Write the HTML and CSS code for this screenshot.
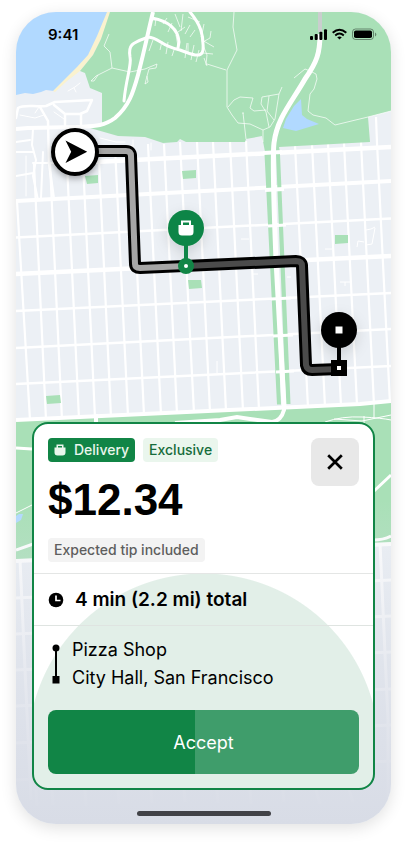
FILE: index.html
```html
<!DOCTYPE html>
<html lang="en">
  <head>
    <meta charset="UTF-8" />
    <meta name="viewport" content="width=device-width, initial-scale=1.0" />
    <title>Delivery offer</title>
    <link rel="stylesheet" href="styles.css">
  </head>
  <body>
    <main class="phone">
      <svg class="map" viewBox="16 12 375 812" preserveAspectRatio="xMidYMin slice" aria-hidden="true">
        <defs>
          <linearGradient id="fade" x1="0" y1="0" x2="0" y2="1">
            <stop offset="0" stop-color="#d8dce6" stop-opacity="0" />
            <stop offset="0.5" stop-color="#d8dce6" stop-opacity="0.6" />
            <stop offset="1" stop-color="#d8dce6" />
          </linearGradient>
          <filter id="shadow" x="-50%" y="-50%" width="200%" height="200%">
            <feDropShadow dx="0" dy="3" stdDeviation="3" flood-opacity="0.3" />
          </filter>
          <filter id="softShadow" x="-50%" y="-50%" width="200%" height="200%">
            <feDropShadow dx="0" dy="5" stdDeviation="7" flood-opacity="0.14" />
          </filter>
        </defs>

        <!-- land -->
        <rect x="16" y="12" width="375" height="812" fill="#ecf0f5" />

        <!-- street grid -->
        <g fill="none" stroke="#fff">
          <path stroke-width="2.2" d="M34 164L46 420M50 164L62 420M67 164L79 419M83 162L95 418M99 160L111 417M115 147L128 416M131 145L144 415M148 144L161 415M164 144L177 414M180 142L194 413M197 142L210 412M213 142L226 411M230 142L243 411M246 141L259 410M295 145L308 408M312 144L325 407M328 144L341 406M344 143L357 405M361 142L374 405M376 117L377 143L390 404M17 201L30 420" />
          <path stroke-width="4.500" d="M95 162L391 147M16 274L391 256" />
          <path stroke-width="4" d="M16 201L391 181" />
          <path stroke-width="2.500" d="M16 237.500L391 218.500M16 311L391 293M16 348L391 329M16 384L391 366" />
          <path stroke-width="1" d="M366 245L372 244L375 228M357 247L358 241L364 242M325 249L332 249M241 239L249 239M366 230L371 229L375 227M253 274L258 274M287 277L291 277M340 282L350 282M345 282L345 286M217 361L217 373" />
          <!-- lower blocks -->
          <path stroke-width="3" d="M16 598L391 580M16 634L391 616M16 670L391 652M16 706L391 689M16 743L391 725M16 780L391 761" />
          <path stroke-width="3" d="M20 560L31 800M380 543L388 720L388 800M36 790L37 806M52 790L53 805M85 790L86 806M118 790L119 804M151 790L152 803M184 790L185 802M217 790L218 803M250 790L251 804M283 790L284 802M316 790L320 804M349 790L353 802" />
        </g>

        <!-- coast -->
        <path fill="#b1d9ff" d="M16 12H108L99 34L88 58L80 70L54 91L46 90L41 92L33 94L25 93L16 95Z" />
        <path fill="#faf2cf" d="M107 12H111L101 39L93 55L80 71L67 81L55 92L53 91L77 67L88 55L97 36Z" />

        <!-- park -->
        <path fill="#a9e0b7" d="M110 12H391V111L368 117L370 142L279 147L280 152H265L262 136L246 139L245 142H200L186 142L180 139L177 142L163 143L145 137L118 136L90 128L102 124V93L90 88L85 73L80 71L93 55L101 39Z" />
        <path fill="#a9e0b7" d="M264.500 154H271L281 404.500H277ZM276 154H280L290.500 404H286ZM85 176L98 175L98 183L87 184ZM182 171L196 170V178L183 179ZM335 235L348 235V243L335 244ZM188 280L201 280L202 288L189 289ZM46 396L60 395L61 403L47 404Z" />
        <path fill="#b1d9ff" d="M301 99L302 115L307 119L319 124L296 131L283 128L286 119L294 106Z" />

        <!-- park paths -->
        <g fill="none" stroke="#fff" stroke-opacity="0.7" stroke-width="1">
          <path d="M109 34L104 46L110 52L112 68L130 72L145 69L157 64L156 68L149 69L147 76L145 84L148 82L147 76M112 68L96 76L91 81L94 81L98 75" />
          <path d="M234 12L233 27L237 50L227 70L227 107L232 115L238 123L250 124L263 130L270 127L275 119L279 94L282 87M279 94L262 97L261 104L266 112L269 127M266 110L254 111L250 108L253 98L240 97L234 100L228 107M263 130L263 142M243 113L246 139M242 113L244 113M269 96L267 111L274 120" />
          <path d="M294 78L305 69L310 71L316 74L317 79L314 89L310 94L308 111L313 115L326 118L335 125L368 117M368 117L391 111" />
          <path d="M206 65L207 55L203 45L201 36M207 64L226 70M203 42L210 38L211 31M202 40L214 47M203 53L213 54M204 24L202 34L199 28" />
          <path d="M156 18L155 26M167 18L163 24M172 23L168 32M175 14L180 27M183 14L181 31M190 25L185 34M188 17L200 22M195 30L190 37M153 40L149 51M162 41L160 50M168 42L166 54M175 47L172 56M187 43L185 58M194 45L191 60M199 50L196 62M204 58L207 66M159 20L153 20M178 32L185 27M188 43L188 53M176 35L178 46" />
        </g>

        <!-- main roads -->
        <g fill="none" stroke="#fff" stroke-linecap="round" stroke-linejoin="round">
          <path stroke-width="4" d="M153 12C149 28 145 48 138 75C133 93 129 106 115 118C103 127 92 126 76 127L28 128L16 129" stroke-linecap="butt" />
          <path stroke-width="3" d="M146 38C132 43 128 45 130 57C132 65 126 78 124 101" />
          <path stroke-width="3" d="M152 18C168 21 178 29 179 42L178 48M148 37C160 38 160 46 180 50C190 54 202 59 203 50C204 34 200 24 190 12" />
          <path stroke-width="2.500" d="M18 108C24 104 34 107 46 106L55 102L92 100L87 111L80 114H65L54 105M65 114V125M81 114V125M40 107L48 121L49 163L54 200M18 108L16 118" />
          <path stroke-width="2" d="M33 129L32 145L36 160L33 176L38 200M16 152H33M33 163L55 163M16 176L33 173M16 142L30 140M43 152L41 198" />
          <path stroke-width="1" d="M20 115L35 118L44 115M35 113L39 107M54 112L64 119M68 91L75 87L80 83M74 88L76 92M26 156V196M100 138L116 142L125 142M151 143V150M133 140V147" />
          <path stroke-width="5" stroke-linecap="butt" d="M320 34C320 53 317 62 305 79C292 102 277 118 274 143C272 160 274 210 276 260L284 406" />
          <path stroke="#c9cece" stroke-width="4" stroke-linecap="butt" d="M320 12V32" />
          <path stroke-width="4" stroke-linecap="butt" d="M263 153L282 152M265 190L284 189" />
          <path stroke-width="3" stroke-linecap="butt" d="M268 226L286 225M271 299L291 298M273 336L293 335M276 372L294 371" />
        </g>

        <!-- lower park -->
        <path fill="#a9e0b7" d="M16 421L391 402V544L16 561Z" />
        <path fill="none" stroke="#fff" stroke-width="4" d="M16 420L360 404Q380 402 391 401M16 561L391 544" />
        <path fill="none" stroke="#fff" stroke-width="4" d="M284 400V410Q281 421 272 422L250 419L237 417L220 420L175 423M96 414V424" />
        <path fill="none" stroke="#fff" stroke-width="1" d="M325 422Q342 416 362 417T391 420M334 419L362 421L391 415M364 416V424M374 404V418M16 513L32 505" />
        <path fill="none" stroke="#fff" stroke-width="3" d="M16 448L32 449M16 550L36 543M373 492L391 475M373 540Q383 540 391 536" />
        <path fill="#b1d9ff" d="M16 516L19 514L23 514L21 520L16 523Z" />

        <rect x="16" y="500" width="375" height="324" fill="url(#fade)" />

        <!-- route -->
        <g fill="none" stroke-linejoin="round">
          <path stroke="#000" stroke-width="12" d="M75 151L126 151Q131 151 131 156L135 264Q135 268 140 268L296 261Q302 261 302 266L306 365Q307 370 312 370L339 369" />
          <path stroke="#a6a6a6" stroke-width="6" d="M75 151L126 151Q131 151 131 156L135 264Q135 268 140 268L186 266" />
          <path stroke="#4b4b4b" stroke-width="6" d="M186 266L296 261Q302 261 302 266L306 365Q307 370 312 370L339 369" />
        </g>

        <!-- driver -->
        <circle cx="75" cy="152" r="22" fill="#fff" stroke="#000" stroke-width="4" filter="url(#shadow)" />
        <path d="M65.500 140.500L87.200 151.800L65.500 163L71.200 151.800Z" />

        <!-- pickup -->
        <g filter="url(#softShadow)">
          <path d="M184 240H188V262H184Z" fill="#118546" />
          <circle cx="186" cy="228" r="18" fill="#118546" />
        </g>
        <circle cx="186" cy="266" r="8" fill="#118546" />
        <circle cx="186" cy="266" r="2" fill="#fff" />
        <path fill="#fff" fill-rule="evenodd" d="M181 220.500H191V225H193.500V232Q193.500 235.500 190 235.500H182Q178.500 235.500 178.500 232V225H181ZM183 222.500V225H189V222.500Z" />

        <!-- drop-off -->
        <g filter="url(#softShadow)">
          <path d="M337 342H341V362H337Z" />
          <circle cx="339" cy="330" r="18" />
        </g>
        <path fill="#fff" d="M335.500 326.500H342.500V333.500H335.500Z" />
        <path d="M331 360H347V376H331Z" />
        <path fill="#fff" d="M337 366H341V370H337Z" />
      </svg>

      <header class="status-bar">
        <span class="time">9:41</span>
        <svg class="status-icons" width="68" height="14" viewBox="0 0 68 14" aria-hidden="true">
          <rect x="0" y="8" width="3" height="4" rx="1" />
          <rect x="4.700" y="6" width="3" height="6" rx="1" />
          <rect x="9.400" y="3.700" width="3" height="8.300" rx="1" />
          <rect x="14" y="1.200" width="3" height="10.800" rx="1" />
          <g fill="none" stroke="#000" stroke-width="2">
            <path d="M22.700 4.700Q29.500 -1.200 36.300 4.700" />
            <path d="M25.200 7.400Q29.500 3.600 33.800 7.400" />
          </g>
          <path d="M27.200 9.300Q29.500 7.600 31.800 9.300L29.500 11.600Z" />
          <rect x="42.500" y="1" width="21" height="10.500" rx="3" fill="none" stroke="#000" stroke-opacity="0.4" />
          <rect x="44" y="2.500" width="18" height="7.500" rx="1.800" />
          <path d="M65 4.500V8.500Q66.300 7.800 66.300 6.500T65 4.500Z" fill-opacity="0.4" />
        </svg>
      </header>

      <section class="card">
        <div class="summary">
          <div class="tags">
            <span class="tag tag-delivery">
              <svg width="12" height="12" viewBox="0 0 12 12" aria-hidden="true">
                <path fill="currentColor" fill-rule="evenodd" d="M2.500 0.500H9.500V3.500H11.500V8.500Q11.500 11.500 8.500 11.500H3.500Q0.500 11.500 0.500 8.500V3.500H2.500ZM4 2V3.500H8V2Z" />
              </svg>
              Delivery
            </span>
            <span class="tag tag-exclusive">Exclusive</span>
          </div>
          <h1 class="price">$12.34</h1>
          <span class="tag tag-tip">Expected tip included</span>
          <button class="btn-close" type="button" aria-label="Decline">
            <svg width="16" height="16" viewBox="0 0 16 16" aria-hidden="true">
              <path d="M1.200 1.200L14.800 14.800M14.800 1.200L1.200 14.800" stroke="#000" stroke-width="2.700" />
            </svg>
          </button>
        </div>

        <div class="trip">
          <svg width="16" height="16" viewBox="0 0 16 16" aria-hidden="true">
            <circle cx="8" cy="8" r="7.300" />
            <path d="M8 3.500V8.500H12.500" fill="none" stroke="#fff" stroke-width="1.700" />
          </svg>
          4 min (2.2 mi) total
        </div>

        <div class="stops">
          <svg width="8" height="40" viewBox="0 0 8 40" aria-hidden="true">
            <circle cx="4" cy="4" r="3.500" />
            <path d="M3 4H5V32H7.500V39.500H0.500V32H3Z" />
          </svg>
          <ul>
            <li>Pizza Shop</li>
            <li>City Hall, San Francisco</li>
          </ul>
        </div>

        <button class="btn-accept" type="button">Accept</button>
      </section>

      <div class="home-indicator"></div>
    </main>
  </body>
</html>
```

FILE: styles.css
```css
* {
  box-sizing: border-box;
}

body {
  margin: 0;
  padding: 12px 16px 20px;
  background-color: #fff;
  color: #000;
  font-family: "Inter", "Liberation Sans", sans-serif;
}

.phone {
  position: relative;
  display: flex;
  flex-direction: column;
  min-height: calc(100vh - 32px);
  overflow: hidden;
  border-radius: 40px;
  background-color: #ecf0f5;
  box-shadow: 0 4px 16px rgba(0, 0, 0, 0.12);
}

.map {
  position: absolute;
  inset: 0;
  width: 100%;
  height: 100%;
}

.status-bar {
  position: relative;
  display: flex;
  justify-content: space-between;
  align-items: center;
  padding: 13px 13px 0 32px;
}

.time {
  font-size: 15px;
  line-height: 20px;
  font-weight: 600;
}

.card {
  position: relative;
  margin: auto 16px 0;
  padding: 14px;
  border: 2px solid #118546;
  border-radius: 16px;
  background: radial-gradient(circle at 50% calc(100% - 39px), #e2efe8 175px, #fff 176px);
}

.summary {
  margin: 0 -14px;
  padding: 0 14px 11px;
  border-bottom: 1px solid #e4e6e5;
}

.tags {
  display: flex;
  gap: 8px;
}

.tag {
  display: inline-flex;
  align-items: center;
  height: 24px;
  padding: 0 6px;
  border-radius: 4px;
  font-size: 14px;
  line-height: 24px;
  font-weight: 450;
}

.tag-delivery {
  gap: 8px;
  background-color: #118546;
  color: #eaf6ed;
}

.tag-exclusive {
  background-color: #eaf6ed;
  color: #166c3b;
}

.tag-tip {
  background-color: #f3f3f3;
  color: #5e5e5e;
}

.price {
  margin: 12px 0;
  font-family: "Liberation Sans", Arial, sans-serif;
  font-size: 44px;
  line-height: 52px;
  font-weight: 700;
}

.btn-close {
  position: absolute;
  top: 14px;
  right: 14px;
  display: flex;
  justify-content: center;
  align-items: center;
  width: 48px;
  height: 48px;
  padding: 0;
  border: none;
  border-radius: 8px;
  background-color: #e8e8e8;
  cursor: pointer;
}

.trip {
  display: flex;
  align-items: center;
  gap: 11px;
  margin: 0 -14px;
  padding: 14px 14px 13px;
  border-bottom: 1px solid #dfe4e1;
  font-size: 19px;
  line-height: 24px;
  font-weight: 600;
}

.stops {
  display: flex;
  align-items: center;
  gap: 12px;
  padding: 10px 4px 18px;
}

.stops ul {
  margin: 0;
  padding: 0;
  list-style: none;
  font-size: 18px;
  line-height: 28px;
  font-weight: 400;
}

.btn-accept {
  display: block;
  width: 100%;
  height: 64px;
  border: none;
  border-radius: 8px;
  background: linear-gradient(to right, #118546 147px, #3f9d6b 147px);
  color: #fff;
  font-family: inherit;
  font-size: 18px;
  font-weight: 400;
  cursor: pointer;
}

.home-indicator {
  position: relative;
  width: 134px;
  height: 5px;
  margin: 21px auto 8px;
  border-radius: 3px;
  background-color: #414247;
}
```
